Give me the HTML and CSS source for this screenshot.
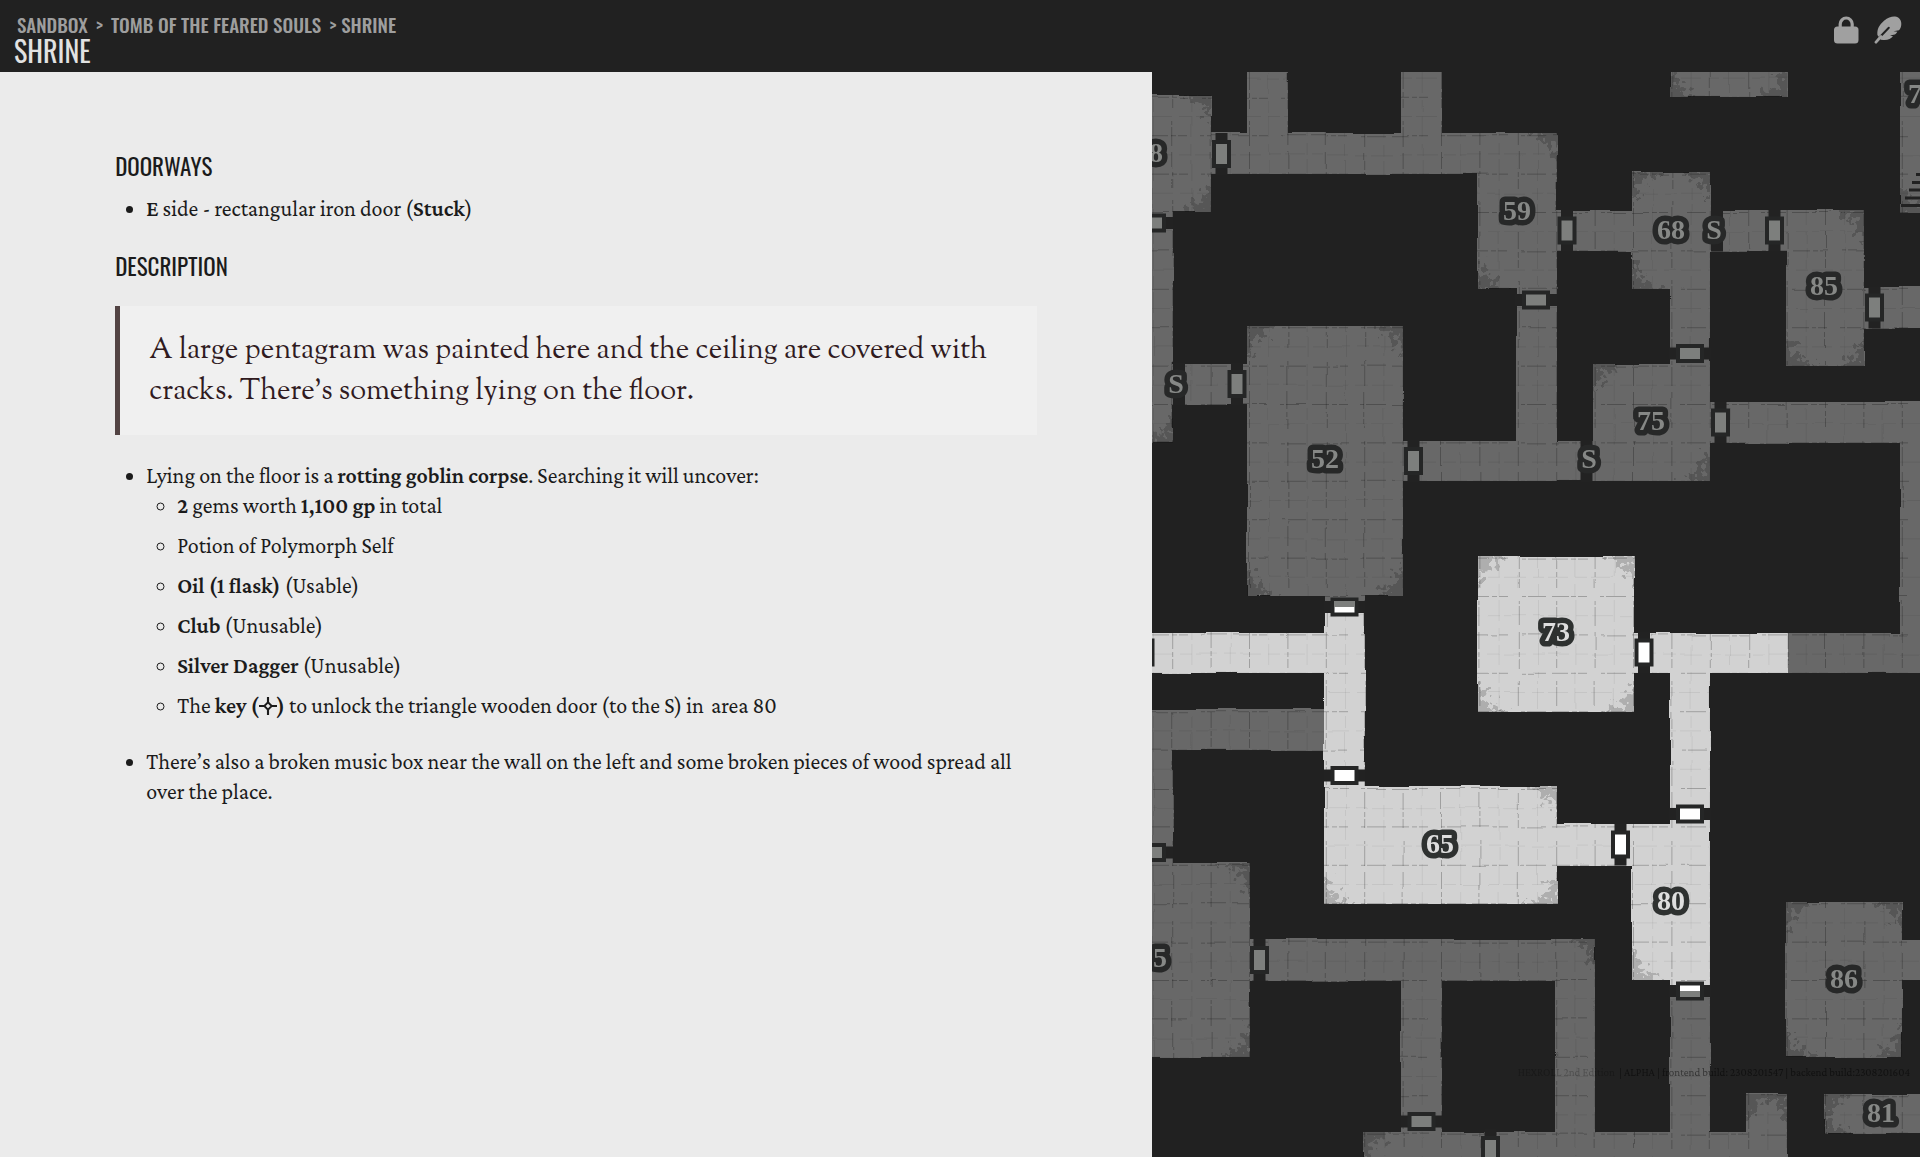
FILE: index.html
```html
<!DOCTYPE html>
<html lang="en">
<head>
<meta charset="utf-8">
<meta name="viewport" content="width=device-width, initial-scale=1">
<title>Shrine</title>
<link rel="stylesheet" href="styles.css">
</head>
<body>
<header class="topbar">
  <div class="titles">
    <nav class="crumbs" aria-label="Breadcrumb">
      <a href="#sandbox">SANDBOX</a><span class="sep">&gt;</span><a href="#tomb">TOMB OF THE FEARED SOULS</a><span>&gt; SHRINE</span>
    </nav>
    <h1 class="title">SHRINE</h1>
  </div>
  <div class="tools">
    <button class="tool" type="button" aria-label="Lock">
      <svg viewBox="0 0 27 28" width="27" height="28"><rect x="1" y="10.500" width="24.500" height="17" rx="3.500" fill="currentColor"/><path d="M7.200 12V8a6 6 0 0 1 12 0v4" fill="none" stroke="currentColor" stroke-width="3.200"/></svg>
    </button>
    <button class="tool" type="button" aria-label="Edit">
      <svg viewBox="0 0 28 28" width="28" height="28"><path d="M3.400 19C3 13 5 9.500 10 4.800C14 1 18 .3 21 .5C25 1 27.500 4 27.300 8C27.300 10.500 26.500 12.800 25 14.200L19.500 15.200L23.400 15.800C22.800 17 22 17.800 20.800 18.500L16 19.500L19 20.200C17 22.500 14 24.300 9.500 24L6.800 23.700Z" fill="currentColor"/><path d="M14.800 11.800L4 23" stroke="#212121" stroke-width="2" stroke-linecap="round"/><path d="M7 20.500L2 26.200" stroke="currentColor" stroke-width="2.800" stroke-linecap="round"/></svg>
    </button>
  </div>
</header>
<main class="split">
  <article class="notes">
    <h2>DOORWAYS</h2>
    <ul class="list">
      <li><b>E</b> side - rectangular iron door (<b>Stuck</b>)</li>
    </ul>
    <h2>DESCRIPTION</h2>
    <blockquote class="readout">A large pentagram was painted here and the ceiling are covered with cracks. There’s something lying on the floor.</blockquote>
    <ul class="list">
      <li>Lying on the floor is a <b>rotting goblin corpse</b>. Searching it will uncover:
        <ul class="sublist">
          <li><b>2</b> gems worth <b>1,100 gp</b> in total</li>
          <li>Potion of Polymorph Self</li>
          <li><b>Oil (1 flask)</b> (Usable)</li>
          <li><b>Club</b> (Unusable)</li>
          <li><b>Silver Dagger</b> (Unusable)</li>
          <li>The <b>key (<svg class="star" viewBox="0 0 17 17" width="18" height="18" role="img" aria-label="star"><path d="M8.500 0V5.500M8.500 11.500V17M0 8.500H5.500M11.500 8.500H17" stroke="currentColor" stroke-width="2"/><path d="M8.500 5L12 8.500L8.500 12L5 8.500Z" fill="none" stroke="currentColor" stroke-width="1.800"/></svg>)</b> to unlock the triangle wooden door (to the S) in <a class="area" href="#area-80">area 80</a></li>
        </ul>
      </li>
      <li>There’s also a broken music box near the wall on the left and some broken pieces of wood spread all over the place.</li>
    </ul>
  </article>
  <aside class="map" aria-label="Dungeon map">
    <svg class="plan" viewBox="0 0 768 1085" preserveAspectRatio="xMinYMin slice">
      <defs>
        <path id="dim" d="M-9 23H59V140H-9ZM95-9H136V70H95ZM249-9H290V70H249ZM57 61H405V102H57ZM326 61H405V217H326ZM-9 138H21V371H-9ZM18 292H98V333H18ZM95 254H251V524H95ZM364 215H405V409H364ZM249 369H443V409H249ZM403 138H483V179H403ZM480 100H558V217H480ZM518 215H558V294H518ZM441 292H558V409H441ZM556 138H636V179H556ZM634 138H712V294H634ZM710 215H777V256H710ZM518-9H635V25H518ZM748-9H777V141H748ZM556 330H777V371H556ZM748 340H777V563H748ZM635 561H777V601H635ZM-9 637H174V678H-9ZM-9 670H21V793H-9ZM-9 791H98V985H-9ZM95 867H443V909H95ZM249 900H290V1064H249ZM403 900H443V1064H403ZM518 919H558V1064H518ZM211 1060H635V1096H211ZM594 1022H635V1096H594ZM672 1022H777V1062H672ZM634 830H750V985H634ZM748 868H777V908H748ZM172 520H213V535H172Z"/>
        <path id="lit" d="M-9 561H180V601H-9ZM172 535H213V720H172ZM326 484H482V640H326ZM480 561H635V601H480ZM518 598H558V757H518ZM480 752H558V908H480ZM403 752H485V794H403ZM172 714H405V832H172ZM518 905H558V919H518Z"/>
        <clipPath id="floor"><use href="#dim"/><use href="#lit"/></clipPath>
        <filter id="rough" x="0" y="0" width="1" height="1"><feTurbulence type="fractalNoise" baseFrequency=".02" numOctaves="1" seed="3"/><feDisplacementMap in="SourceGraphic" scale="4" xChannelSelector="R" yChannelSelector="G"/></filter>
        <filter id="speckle" x="-.1" y="-.1" width="1.200" height="1.200"><feTurbulence type="fractalNoise" baseFrequency=".16" numOctaves="2" seed="8"/><feDisplacementMap in="SourceGraphic" scale="34" xChannelSelector="R" yChannelSelector="G"/></filter>
        <path id="c" d="M-6-6H30L18 7L8 9L7 20L-6 32Z"/>
        <g id="dv"><path d="M-6-21H6V21H-6Z" class="wall"/><path d="M-7.500-12H7.500V12H-7.500Z" class="leaf"/></g>
        <g id="dh"><path d="M-21-6H21V6H-21Z" class="wall"/><path d="M-12-7.500H12V7.500H-12Z" class="leaf"/></g>
        <path id="sw" d="M-6-21H6V21H-6Z" class="wall"/>
      </defs>
      <g filter="url(#rough)">
        <use href="#dim" fill="#686868"/>
        <use href="#lit" fill="#d2d2d2"/>
        <g clip-path="url(#floor)" fill="none" stroke="#000">
          <path opacity=".24" stroke-width="1" stroke-dasharray="17 3 5 2 9 13 4 2 19 6" d="M20.700 0V1085M59.100 0V1085M97.500 0V1085M135.900 0V1085M174.300 0V1085M212.700 0V1085M251.100 0V1085M289.500 0V1085M327.900 0V1085M366.300 0V1085M404.700 0V1085M443.100 0V1085M481.500 0V1085M519.900 0V1085M558.300 0V1085M596.700 0V1085M635.100 0V1085M673.500 0V1085M711.900 0V1085M750.300 0V1085M0 25.300H768M0 63.700H768M0 102.100H768M0 140.500H768M0 178.900H768M0 217.300H768M0 255.700H768M0 294.100H768M0 332.500H768M0 370.900H768M0 409.300H768M0 447.700H768M0 486.100H768M0 524.500H768M0 562.900H768M0 601.300H768M0 639.700H768M0 678.100H768M0 716.500H768M0 754.900H768M0 793.300H768M0 831.700H768M0 870.100H768M0 908.500H768M0 946.900H768M0 985.300H768M0 1023.700H768M0 1062.100H768"/>
          <path opacity=".06" stroke-width="1" stroke-dasharray="21 7 12 4" d="M1.500 0V1085M39.900 0V1085M78.300 0V1085M116.700 0V1085M155.100 0V1085M193.500 0V1085M231.900 0V1085M270.300 0V1085M308.700 0V1085M347.100 0V1085M385.500 0V1085M423.900 0V1085M462.300 0V1085M500.700 0V1085M539.100 0V1085M577.500 0V1085M615.900 0V1085M654.300 0V1085M692.700 0V1085M731.100 0V1085M0 6.100H768M0 44.500H768M0 82.900H768M0 121.300H768M0 159.700H768M0 198.100H768M0 236.500H768M0 274.900H768M0 313.300H768M0 351.700H768M0 390.100H768M0 428.500H768M0 466.900H768M0 505.300H768M0 543.700H768M0 582.100H768M0 620.500H768M0 658.900H768M0 697.300H768M0 735.700H768M0 774.100H768M0 812.500H768M0 850.900H768M0 889.300H768M0 927.700H768M0 966.100H768M0 1004.500H768M0 1042.900H768"/>
        </g>
      </g>
      <g clip-path="url(#floor)"><g filter="url(#speckle)" opacity=".17">
        <use href="#c" transform="translate(59 23) scale(-1 1)"/><use href="#c" transform="translate(59 140) scale(-1)"/>
        <use href="#c" transform="translate(405 61) scale(-1 1)"/><use href="#c" transform="translate(326 217) scale(1 -1)"/>
        <use href="#c" transform="translate(95 254)"/><use href="#c" transform="translate(251 254) scale(-1 1)"/><use href="#c" transform="translate(95 524) scale(1 -1)"/><use href="#c" transform="translate(251 524) scale(-1)"/>
        <use href="#c" transform="translate(480 100)"/><use href="#c" transform="translate(558 100) scale(-1 1)"/><use href="#c" transform="translate(480 217) scale(1 -1)"/>
        <use href="#c" transform="translate(441 292)"/><use href="#c" transform="translate(558 409) scale(-1)"/>
        <use href="#c" transform="translate(712 138) scale(-1 1)"/><use href="#c" transform="translate(634 294) scale(1 -1)"/><use href="#c" transform="translate(712 294) scale(-1)"/>
        <use href="#c" transform="translate(518 25) scale(1 -1)"/><use href="#c" transform="translate(635 25) scale(-1)"/><use href="#c" transform="translate(748 140) scale(1 -1)"/>
        <use href="#c" transform="translate(21 371) scale(-1)"/>
        <use href="#c" transform="translate(326 484)"/><use href="#c" transform="translate(482 484) scale(-1 1)"/><use href="#c" transform="translate(326 640) scale(1 -1)"/><use href="#c" transform="translate(482 640) scale(-1)"/>
        <use href="#c" transform="translate(405 714) scale(-1 1)"/><use href="#c" transform="translate(172 832) scale(1 -1)"/><use href="#c" transform="translate(405 832) scale(-1)"/>
        <use href="#c" transform="translate(480 908) scale(1 -1)"/><use href="#c" transform="translate(443 867) scale(-1 1)"/>
        <use href="#c" transform="translate(98 791) scale(-1 1)"/><use href="#c" transform="translate(98 985) scale(-1)"/>
        <use href="#c" transform="translate(634 830)"/><use href="#c" transform="translate(750 830) scale(-1 1)"/><use href="#c" transform="translate(634 985) scale(1 -1)"/><use href="#c" transform="translate(750 985) scale(-1)"/>
        <use href="#c" transform="translate(594 1022)"/><use href="#c" transform="translate(635 1022) scale(-1 1)"/><use href="#c" transform="translate(672 1022)"/><use href="#c" transform="translate(672 1062) scale(1 -1)"/><use href="#c" transform="translate(211 1060)"/>
      </g></g>
      <path d="M764 102.500H768M760 110.500H768M757 118H768M753 126H768M749 133.500H768" stroke="#212121" stroke-width="3"/>
      <g fill="#7d7f7d">
        <use href="#dv" x="69.500" y="82"/><use href="#dh" x="0" y="151"/><use href="#dh" x="384" y="228"/><use href="#dv" x="85" y="312"/><use href="#dv" x="261.500" y="389"/>
        <use href="#dv" x="415" y="158.500"/><use href="#dv" x="622.500" y="158.500"/><use href="#dv" x="722.500" y="235.500"/><use href="#dv" x="568.500" y="350.500"/><use href="#dh" x="538" y="281.500"/>
        <use href="#sw" x="27" y="312"/><use href="#sw" x="565" y="158.500"/><use href="#sw" x="434.500" y="389"/>
        <use href="#dh" x="0" y="780.500"/><use href="#dv" x="107.500" y="888"/><use href="#dh" x="269.500" y="1049.500"/><use href="#dv" x="338.500" y="1078"/>
      </g>
      <g fill="#fff">
        <use href="#dh" x="192.500" y="535"/><use href="#dh" x="192.500" y="703.500"/><use href="#dv" x="492" y="580.500"/><use href="#dh" x="538" y="742"/><use href="#dv" x="468.500" y="772.500"/><use href="#dv" x="-7" y="580.500"/><use href="#dh" x="538" y="919"/>
      </g>
      <path d="M182 529H203V535H182ZM528 919H548V925H528Z" fill="#7d7f7d"/>
      <g class="labels dimmed">
        <text x="4" y="90">8</text><text x="365" y="148">59</text><text x="519" y="167">68</text><text x="562" y="167">S</text><text x="672" y="223">85</text><text x="24" y="321">S</text><text x="173" y="396">52</text><text x="499" y="358">75</text><text x="437" y="396">S</text><text x="763" y="31">7</text><text x="8" y="895">5</text><text x="692" y="916">86</text><text x="729" y="1050">81</text>
      </g>
      <g class="labels">
        <text x="404" y="569">73</text><text x="288" y="781">65</text><text x="519" y="838">80</text>
      </g>
    </svg>
    <p class="build"><a href="#about">HEXROLL 2nd Edition</a>  | ALPHA | frontend build: 2308201547 | backend build:2308201604</p>
  </aside>
</main>
</body>
</html>
```
FILE: styles.css
```css
* { box-sizing: border-box; }
html, body { height: 100%; }
body {
  margin: 0;
  display: flex;
  flex-direction: column;
  background: #ebebeb;
  color: #1b1b1b;
  font-family: "Crimson Pro", "Crimson Text", "Liberation Serif", serif;
  font-size: 22px;
  line-height: 30px;
}
a { color: inherit; text-decoration: none; }
b { font-weight: 600; }

.topbar {
  display: flex;
  justify-content: space-between;
  padding: 12px 18px 6px 14px;
  background: #212121;
}
.topbar, .notes h2 {
  font-family: Oswald, "Roboto Condensed", "Liberation Sans Narrow", Roboto, sans-serif;
}
.crumbs {
  display: flex;
  gap: 8px;
  padding-left: 3px;
  color: #9e9e9e;
  font-size: 19px;
  font-weight: 500;
  line-height: 24px;
}
.title {
  margin: 0;
  color: #e2e2e2;
  font-size: 28px;
  font-weight: 400;
  line-height: 30px;
}
.tools { display: flex; align-items: flex-start; gap: 14px; padding-top: 4px; }
.tool { display: flex; padding: 0; border: 0; background: none; color: #a0a0a0; }

.split { display: grid; grid-template-columns: 3fr 2fr; flex: 1; min-height: 0; }

.notes { padding: 76px 10% 40px; min-width: 0; }
.notes h2 {
  margin: 0;
  font-size: 23px;
  font-weight: 400;
  line-height: 36px;
}
.list { margin: 10px 0 24px; padding-left: 31px; }
.sublist { margin: 0; padding-left: 31px; list-style-type: circle; }
.list li { margin-bottom: 10px; }
.list > li:last-child { margin-bottom: 0; }
.list > li + li { margin-top: 26px; }
.sublist > li:last-child { margin-bottom: 0; }
.star { vertical-align: -2px; }
.area { padding-left: 3px; }
.readout {
  margin: 22px 0 26px;
  padding: 25px 29px 22px;
  border-left: 5px solid #524343;
  background: #f0f0f0;
  color: #301b1f;
  font-family: "Sorts Mill Goudy", "Goudy Bookletter 1911", "Liberation Serif", serif;
  font-size: 29px;
  line-height: 41px;
}

.map { position: relative; min-width: 0; overflow: hidden; background: #212121; }
.plan { display: block; width: 100%; height: 100%; }
.wall { fill: #222; }
.leaf { stroke: #252626; stroke-width: 4px; }
.labels {
  fill: #dedede;
  stroke: #2e3130;
  stroke-width: 11px;
  stroke-linejoin: round;
  paint-order: stroke;
  font-family: "Liberation Serif", serif;
  font-size: 28px;
  font-weight: 700;
  text-anchor: middle;
}
.dimmed { fill: #868886; stroke: #272828; }
.build {
  position: absolute;
  right: 10px;
  bottom: 75px;
  margin: 0;
  color: rgba(0, 0, 0, .5);
  font-size: 11px;
  line-height: 20px;
  white-space: pre;
}
.build a { color: rgba(0, 0, 0, .25); }
```
